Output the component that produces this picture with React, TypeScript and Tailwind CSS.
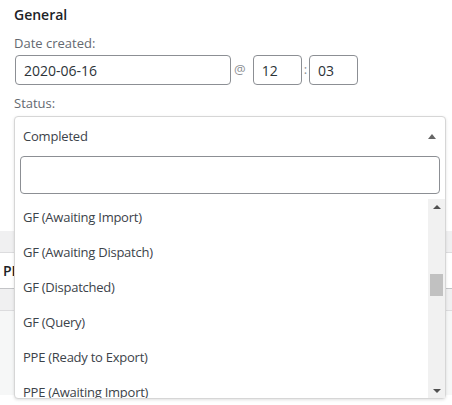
import { useState } from "react";

const statuses = [
  "GF (Awaiting Import)",
  "GF (Awaiting Dispatch)",
  "GF (Dispatched)",
  "GF (Query)",
  "PPE (Ready to Export)",
  "PPE (Awaiting Import)",
];

function TimeBox({ value }: { value: string }) {
  return (
    <div className="flex h-[30px] w-[49px] items-center rounded-[4px] border border-[#8c8f94] pl-[8px] text-[14px] text-[#2c3338]">
      {value}
    </div>
  );
}

function StatusDropdown() {
  const [query, setQuery] = useState("");

  return (
    <div className="absolute left-[14px] top-[116px] z-10 flex h-[283px] w-[432px] flex-col rounded-[4px] border border-[#d6d6d6] bg-white shadow-[0_1px_3px_rgba(0,0,0,0.12)]">
      <div className="flex h-[39px] shrink-0 items-center justify-between pl-[8px] pr-[9px]">
        <span className="text-[13px] tracking-[-0.2px] text-[#3c434a]">Completed</span>
        <span className="h-0 w-0 border-x-[4px] border-b-[5px] border-x-transparent border-b-[#666]" />
      </div>
      <div className="shrink-0 px-[5px] pb-[5px]">
        <input
          value={query}
          onChange={(e) => setQuery(e.target.value)}
          className="block h-[38px] w-full rounded-[4px] border border-[#8c8f94] px-2 text-[13px] outline-none"
        />
      </div>
      <div className="flex min-h-0 flex-1">
        <ul className="flex-1 overflow-hidden pt-[1px]">
          {statuses.map((s) => (
            <li
              key={s}
              className="flex h-[35px] items-center pl-[8px] text-[13px] tracking-[-0.25px] text-[#3c434a]"
            >
              {s}
            </li>
          ))}
        </ul>
        <div className="flex w-[17px] flex-col items-center bg-[#f1f1f1] pb-[5px] pt-[6px]">
          <span className="h-0 w-0 border-x-[4px] border-b-[4px] border-x-transparent border-b-[#505050]" />
          <div className="mt-[65px] h-[22px] w-[13px] bg-[#c1c1c1]" />
          <div className="flex-1" />
          <span className="h-0 w-0 border-x-[4px] border-t-[4px] border-x-transparent border-t-[#505050]" />
        </div>
      </div>
    </div>
  );
}

export default function App() {
  return (
    <div
      className="relative h-[405px] w-[452px] overflow-hidden bg-white"
      style={{ fontFamily: '"Open Sans", "Noto Sans", sans-serif' }}
    >
      <div className="px-[14px] pt-[5px]">
        <h2 className="text-[14px] font-semibold leading-[20px] text-[#1d2327]">General</h2>
        <p className="mt-[8px] text-[13px] leading-[20px] text-[#646970]">Date created:</p>
        <div className="mt-[2px] flex items-center">
          <div className="ml-[1px] flex h-[30px] w-[216px] items-center rounded-[4px] border border-[#8c8f94] pl-[8px] text-[14px] text-[#2c3338]">
            2020-06-16
          </div>
          <span className="ml-[3px] mr-[7px] text-[13px] text-[#8c8f94]">@</span>
          <TimeBox value="12" />
          <span className="mx-[2px] text-[13px] text-[#8c8f94]">:</span>
          <TimeBox value="03" />
        </div>
        <p className="mt-[8px] text-[13px] leading-[20px] text-[#646970]">Status:</p>
      </div>

      <div className="mt-[118px]">
        <div className="h-[22px] border-b border-[#dcdcde] bg-[#f0f0f1]" />
        <div className="flex h-[36px] items-center border-b border-[#c3c4c7] pl-[3px]">
          <span className="w-[12px] overflow-hidden whitespace-nowrap text-[14px] font-semibold text-[#1d2327]">
            PD
          </span>
        </div>
        <div className="h-[22px] border-b border-[#dcdcde] bg-[#f0f0f1]" />
        <div className="h-[84px] bg-[#f6f7f7]" />
      </div>

      <StatusDropdown />
    </div>
  );
}
